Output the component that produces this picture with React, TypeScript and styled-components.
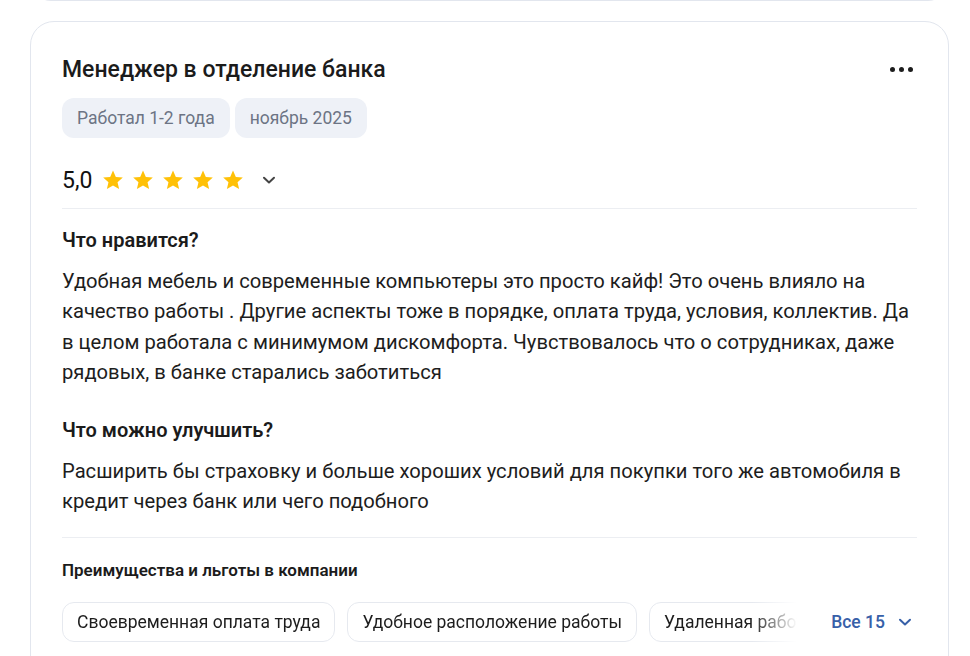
import React from "react";
import styled, { createGlobalStyle } from "styled-components";

const Global = createGlobalStyle`
  html, body { margin: 0; padding: 0; background: #ffffff; }
  body { font-family: Roboto, "Noto Sans", Arial, sans-serif; color: #1f1f1f; overflow: hidden; }
`;

const Feed = styled.div`
  display: flex;
  flex-direction: column;
  gap: 20px;
  padding: 0 21px 0 30px;
  overflow: hidden;
  height: 656px;
`;

const Card = styled.article<{ $stub?: boolean }>`
  border: 1px solid #e2e6ee;
  border-radius: 24px;
  background: #fff;
  padding: 31px 31px 40px;
  display: flex;
  flex-direction: column;
  flex-shrink: 0;
  ${(p) => (p.$stub ? "height: 40px; margin-top: -41px; padding: 0;" : "")}
`;

const Header = styled.div`
  display: flex;
  align-items: center;
  justify-content: space-between;
  height: 32px;
`;

const Title = styled.h2`
  margin: 0;
  font-size: 23px;
  font-weight: 500;
  color: #1b1b1b;
`;

const MoreButton = styled.button`
  border: 0;
  background: none;
  padding: 0;
  height: 24px;
  display: flex;
  align-items: center;
  gap: 4px;
  margin-right: 4px;
  cursor: pointer;
`;

const Dot = styled.span`
  width: 5px;
  height: 5px;
  border-radius: 50%;
  background: #1d1d1d;
`;

const Tags = styled.div`
  display: flex;
  gap: 5px;
  margin-top: 13px;
`;

const Tag = styled.span`
  display: inline-flex;
  align-items: center;
  height: 40px;
  padding: 0 15px;
  border-radius: 12px;
  background: #eef1f7;
  color: #6c7484;
  font-size: 17.5px;
`;

const RatingRow = styled.div`
  display: flex;
  align-items: center;
  height: 32px;
  margin-top: 26px;
`;

const Score = styled.span`
  font-size: 23px;
  color: #111;
  margin-right: 10px;
`;

const Stars = styled.div`
  display: flex;
  gap: 8px;
`;

const Chevron = styled.svg<{ $color?: string; $ml?: number }>`
  margin-left: ${(p) => (p.$ml !== undefined ? p.$ml : 17)}px;
  color: ${(p) => p.$color || "#444"};
`;

const Divider = styled.hr<{ $top?: number }>`
  border: 0;
  border-top: 1px solid #eceef2;
  margin: ${(p) => p.$top ?? 12}px 0 0;
`;

const SectionTitle = styled.h3<{ $size?: number }>`
  margin: 0;
  font-size: ${(p) => p.$size || 20}px;
  font-weight: 600;
  color: #1b1b1b;
  line-height: 24px;
`;

const Section = styled.section<{ $top: number }>`
  margin-top: ${(p) => p.$top}px;
`;

const Text = styled.p`
  margin: 14px 0 0;
  font-size: 20.2px;
  line-height: 30.3px;
  color: #1d1d1d;
`;

const BenefitsRow = styled.div`
  display: flex;
  align-items: center;
  margin-top: 20px;
`;

const ChipScroller = styled.div`
  display: flex;
  gap: 12px;
  flex: 1;
  overflow: hidden;
  -webkit-mask-image: linear-gradient(to right, #000 690px, transparent 735px);
  mask-image: linear-gradient(to right, #000 690px, transparent 735px);
`;

const Chip = styled.span`
  flex-shrink: 0;
  display: inline-flex;
  align-items: center;
  height: 38px;
  padding: 0 14px;
  border: 1px solid #e6e9ef;
  border-radius: 12px;
  font-size: 17.5px;
  color: #1d1d1d;
  white-space: nowrap;
`;

const AllButton = styled.button`
  border: 0;
  background: none;
  display: flex;
  align-items: center;
  padding: 0;
  margin-left: 30px;
  margin-right: 4px;
  font-family: inherit;
  font-size: 17.5px;
  font-weight: 500;
  color: #3760a8;
  cursor: pointer;
  white-space: nowrap;
`;

const Star = () => (
  <svg width="22" height="22" viewBox="0 0 24 24">
    <path
      d="M12 1.6l3.1 7 7.6.7-5.75 5.05 1.72 7.45L12 17.9l-6.67 3.9 1.72-7.45L1.3 9.3l7.6-.7z"
      fill="#ffc107"
    />
  </svg>
);

const ChevronDown = ({ color, ml }: { color?: string; ml?: number }) => (
  <Chevron $color={color} $ml={ml} width="16" height="16" viewBox="0 0 16 16">
    <path d="M3 5.8l5 4.7 5-4.7" fill="none" stroke="currentColor" strokeWidth="2" strokeLinecap="round" strokeLinejoin="round" />
  </Chevron>
);

export default function App() {
  return (
    <>
      <Global />
      <Feed>
        <Card $stub />
        <Card>
          <Header>
            <Title>Менеджер в отделение банка</Title>
            <MoreButton aria-label="Ещё">
              <Dot />
              <Dot />
              <Dot />
            </MoreButton>
          </Header>
          <Tags>
            <Tag>Работал 1-2 года</Tag>
            <Tag>ноябрь 2025</Tag>
          </Tags>
          <RatingRow>
            <Score>5,0</Score>
            <Stars>
              <Star />
              <Star />
              <Star />
              <Star />
              <Star />
            </Stars>
            <ChevronDown />
          </RatingRow>
          <Divider />
          <Section $top={19}>
            <SectionTitle>Что нравится?</SectionTitle>
            <Text>
              Удобная мебель и современные компьютеры это просто кайф! Это очень влияло на качество работы . Другие
              аспекты тоже в порядке, оплата труда, условия, коллектив. Да в целом работала с минимумом дискомфорта.
              Чувствовалось что о сотрудниках, даже рядовых, в банке старались заботиться
            </Text>
          </Section>
          <Section $top={31}>
            <SectionTitle>Что можно улучшить?</SectionTitle>
            <Text>
              Расширить бы страховку и больше хороших условий для покупки того же автомобиля в кредит через банк или
              чего подобного
            </Text>
          </Section>
          <Divider $top={20} />
          <Section $top={20}>
            <SectionTitle $size={17}>Преимущества и льготы в компании</SectionTitle>
            <BenefitsRow>
              <ChipScroller>
                <Chip>Своевременная оплата труда</Chip>
                <Chip>Удобное расположение работы</Chip>
                <Chip>Удаленная работа</Chip>
                <Chip>ДМС</Chip>
              </ChipScroller>
              <AllButton>
                Все 15
                <ChevronDown color="#3760a8" ml={12} />
              </AllButton>
            </BenefitsRow>
          </Section>
        </Card>
      </Feed>
    </>
  );
}
